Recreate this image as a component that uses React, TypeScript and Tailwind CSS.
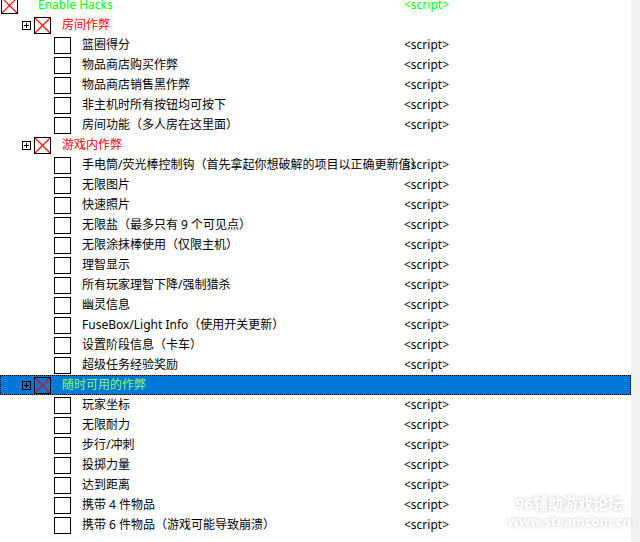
import React from "react";

type Row = {
  level: 0 | 1 | 2;
  name: string;
  color?: string;
  script?: boolean;
  selected?: boolean;
};

const rows: Row[] = [
  { level: 0, name: "Enable Hacks", color: "text-[#00ff00]", script: true },
  { level: 1, name: "房间作弊", color: "text-[#ff0000]" },
  { level: 2, name: "篮圈得分", script: true },
  { level: 2, name: "物品商店购买作弊", script: true },
  { level: 2, name: "物品商店销售黑作弊", script: true },
  { level: 2, name: "非主机时所有按钮均可按下", script: true },
  { level: 2, name: "房间功能（多人房在这里面）", script: true },
  { level: 1, name: "游戏内作弊", color: "text-[#ff0000]" },
  { level: 2, name: "手电筒/荧光棒控制钩（首先拿起你想破解的项目以正确更新值）", script: true },
  { level: 2, name: "无限图片", script: true },
  { level: 2, name: "快速照片", script: true },
  { level: 2, name: "无限盐（最多只有 9 个可见点）", script: true },
  { level: 2, name: "无限涂抹棒使用（仅限主机）", script: true },
  { level: 2, name: "理智显示", script: true },
  { level: 2, name: "所有玩家理智下降/强制猎杀", script: true },
  { level: 2, name: "幽灵信息", script: true },
  { level: 2, name: "FuseBox/Light Info（使用开关更新）", script: true },
  { level: 2, name: "设置阶段信息（卡车）", script: true },
  { level: 2, name: "超级任务经验奖励", script: true },
  { level: 1, name: "随时可用的作弊", color: "text-[#8cff5a]", selected: true },
  { level: 2, name: "玩家坐标", script: true },
  { level: 2, name: "无限耐力", script: true },
  { level: 2, name: "步行/冲刺", script: true },
  { level: 2, name: "投掷力量", script: true },
  { level: 2, name: "达到距离", script: true },
  { level: 2, name: "携带 4 件物品", script: true },
  { level: 2, name: "携带 6 件物品（游戏可能导致崩溃）", script: true },
];

function CheckBox({ crossed }: { crossed?: boolean }) {
  return (
    <svg width="17" height="17" viewBox="0 0 17 17" className="block shrink-0">
      {crossed && <path d="M1 1L16 16M16 1L1 16" stroke="#ff0000" strokeWidth="1.1" fill="none" />}
      <rect x="0.5" y="0.5" width="16" height="16" fill="none" stroke="#000" />
    </svg>
  );
}

function Expander() {
  return (
    <svg width="9" height="9" viewBox="0 0 9 9" className="block shrink-0" shapeRendering="crispEdges">
      <rect x="0.5" y="0.5" width="8" height="8" fill="none" stroke="#000" />
      <path d="M2 4.5H7M4.5 2V7" stroke="#000" fill="none" />
    </svg>
  );
}

export default function App() {
  return (
    <div
      className="flex h-[542px] w-[640px] overflow-hidden bg-white text-[12px] text-black"
      style={{ fontFamily: '"Noto Sans", "Noto Sans CJK SC", sans-serif' }}
    >
      <div className="relative w-[631px] shrink-0">
        <div className="-mt-[5px] flex flex-col">
          {rows.map((row, i) => (
            <div
              key={i}
              className={
                row.selected
                  ? "flex h-5 items-center bg-[#0078d7] outline-1 -outline-offset-1 outline-dotted outline-black"
                  : "flex h-5 items-center"
              }
            >
              <div className="flex w-[404px] shrink-0 items-center whitespace-nowrap">
                {row.level === 0 && (
                  <div className="ml-[1px] flex items-center">
                    <CheckBox crossed />
                    <span className={`ml-[20px] ${row.color}`}>{row.name}</span>
                  </div>
                )}
                {row.level === 1 && (
                  <div className="ml-[22px] flex items-center gap-[3px]">
                    <Expander />
                    <CheckBox crossed />
                    <span className={`ml-[8px] ${row.color}`}>{row.name}</span>
                  </div>
                )}
                {row.level === 2 && (
                  <div className="ml-[54px] flex items-center">
                    <CheckBox />
                    <span className="ml-[11px]">{row.name}</span>
                  </div>
                )}
              </div>
              {row.script && (
                <span className={row.level === 0 ? "text-[#00ff00]" : ""}>&lt;script&gt;</span>
              )}
            </div>
          ))}
        </div>
        <div className="absolute right-0 top-[494px] flex flex-col items-center font-bold leading-[18px] text-white [text-shadow:0_0_4px_rgba(0,0,0,0.25)]">
          <span className="text-[15px]">96辅助游戏论坛</span>
          <span className="text-[13px]">www.steamcom.cn</span>
        </div>
      </div>
      <div className="flex-1 bg-[#f0f0f0]" />
    </div>
  );
}
